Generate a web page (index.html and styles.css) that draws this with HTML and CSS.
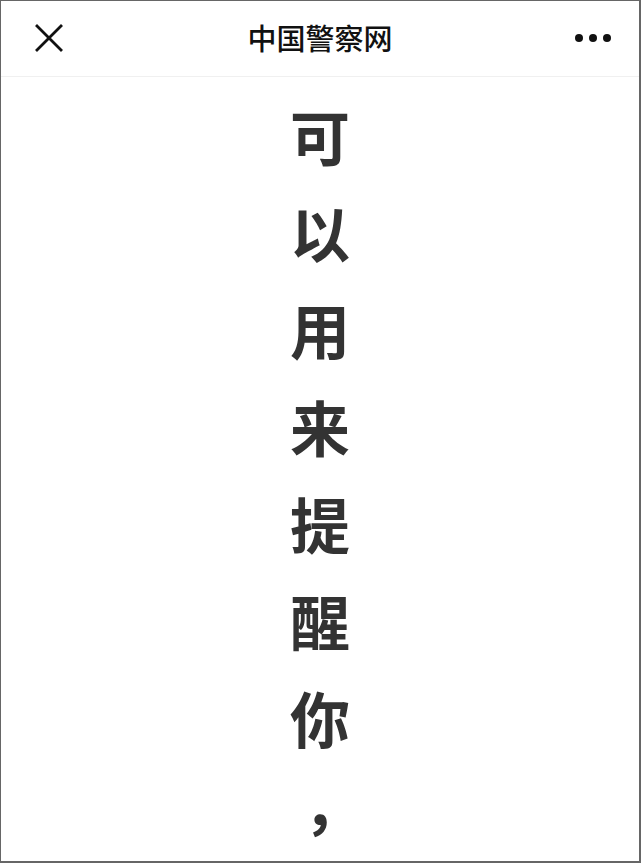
FILE: index.html
```html
<!DOCTYPE html>
<html lang="zh-CN">
<head>
<meta charset="utf-8">
<title>中国警察网</title>
<link rel="stylesheet" href="styles.css">
</head>
<body>
<div class="frame">
  <header class="topbar">
    <button class="icon-btn close" aria-label="关闭">
      <svg width="28" height="28" viewBox="0 0 28 28"><path d="M2 2 L26 26 M26 2 L2 26" stroke="#111" stroke-width="2.8" stroke-linecap="square" fill="none"/></svg>
    </button>
    <h1 class="title">中国警察网</h1>
    <button class="icon-btn more" aria-label="更多">
      <span class="dot"></span><span class="dot"></span><span class="dot"></span>
    </button>
  </header>
  <main class="content">
    <div class="column">
      <span class="ch">可</span>
      <span class="ch">以</span>
      <span class="ch">用</span>
      <span class="ch">来</span>
      <span class="ch">提</span>
      <span class="ch">醒</span>
      <span class="ch">你</span>
      <span class="ch punct">，</span>
    </div>
  </main>
</div>
</body>
</html>
```
FILE: styles.css
```css
html, body {
  margin: 0;
  padding: 0;
  background: #fff;
}
.frame {
  box-sizing: border-box;
  width: 641px;
  height: 863px;
  overflow: hidden;
  border-style: solid;
  border-color: #666;
  border-width: 1px 2px 2px 1px;
  background: #fff;
  font-family: "Noto Sans CJK SC", "Noto Sans", sans-serif;
}
.topbar {
  box-sizing: border-box;
  height: 76px;
  display: grid;
  grid-template-columns: 100px 1fr 100px;
  align-items: center;
  border-bottom: 1px solid #f0f0f0;
}
.icon-btn {
  border: 0;
  background: none;
  padding: 0;
  display: flex;
  align-items: center;
  cursor: pointer;
}
.close {
  justify-self: start;
  margin-left: 34px;
  margin-top: -2px;
}
.title {
  margin: 0;
  text-align: center;
  font-size: 29px;
  font-weight: 500;
  color: #111;
  line-height: 1;
  margin-top: -2px;
}
.more {
  justify-self: end;
  margin-right: 28px;
  gap: 6px;
  margin-top: -2px;
}
.dot {
  width: 8px;
  height: 8px;
  border-radius: 50%;
  background: #111;
}
.content {
  padding-top: 9px;
}
.column {
  display: flex;
  flex-direction: column;
  align-items: center;
  font-size: 60px;
  font-weight: 700;
  color: #333;
  line-height: 97px;
}
.ch {
  display: block;
  height: 97px;
}
.punct {
  font-family: "Noto Sans CJK TC", "Noto Sans CJK SC", sans-serif;
  padding-top: 7px;
}
```
